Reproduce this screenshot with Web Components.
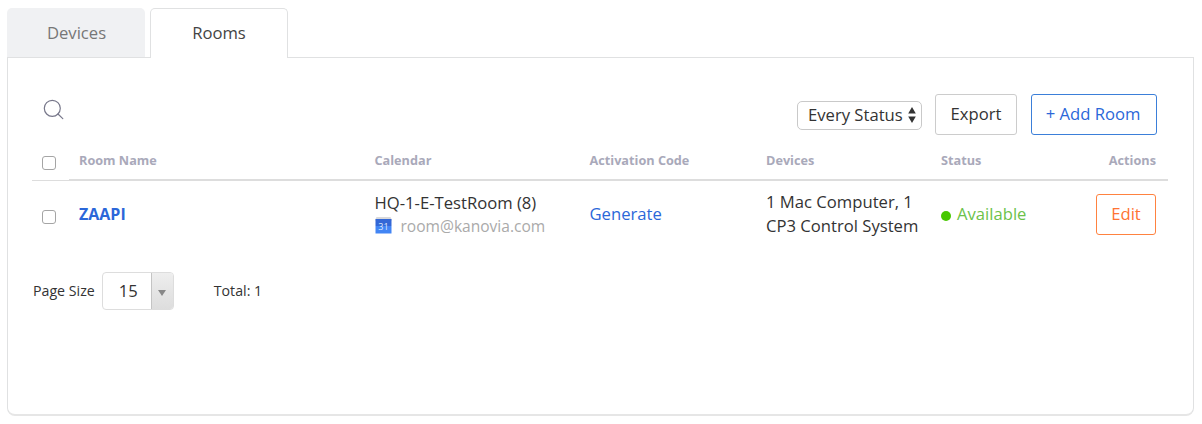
<!DOCTYPE html>
<html lang="en">
<head>
<meta charset="utf-8">
<title>Rooms</title>
<style>
body { margin: 0; background: #fff; font-family: "Open Sans", "Noto Sans", sans-serif; font-size: 16.65px; line-height: 24px; color: #333; }
</style>
</head>
<body>
<rooms-page></rooms-page>
<script>
function define(name, markup) {
  const template = document.createElement('template');
  template.innerHTML = '<style>*{box-sizing:border-box}:host{box-sizing:border-box}</style>' + markup;
  customElements.define(name, class extends HTMLElement {
    constructor() {
      super();
      this.attachShadow({ mode: 'open' }).append(template.content.cloneNode(true));
    }
  });
}

define('tab-item', `
<style>
:host { display: flex; align-items: center; justify-content: center; width: 138px; height: 49px; padding-left: 1px; border-radius: 5px 5px 0 0; background: #f0f1f3; color: #777; }
:host([active]) { height: 50px; padding: 0 0 2px; background: #fff; color: #444; border: 1px solid #e0e1e2; border-bottom: 0; margin-left: 5px; }
</style><slot></slot>`);

define('search-icon', `
<style>:host { display: block; width: 22px; height: 22px; } svg { display: block; }</style>
<svg width="22" height="22" viewBox="0 0 22 22" fill="none" stroke="#77778a" stroke-width="1.2" stroke-linecap="round"><circle cx="9.3" cy="9.3" r="8"/><path d="M15 15L19.8 19.6"/></svg>`);

define('status-select', `
<style>
:host { display: flex; align-items: center; justify-content: space-between; width: 125px; height: 29px; padding: 0 5px 1px 10px; border: 1px solid #c9c9c9; border-radius: 5px; white-space: nowrap; }
svg { display: block; }
</style><span><slot></slot></span>
<svg width="8" height="16" viewBox="0 0 8 16" fill="#333"><path d="M4 0L7.8 6.6H.2zM4 16L.2 9.4H7.8z"/></svg>`);

define('action-button', `
<style>
:host { display: flex; align-items: center; justify-content: center; height: 41px; width: 82px; padding-bottom: 2px; border: 1px solid #ccc; border-radius: 3px; background: #fff; white-space: nowrap; }
:host([kind=primary]) { width: 126px; padding-right: 2px; border-color: #3b7fd9; color: #2b67d9; }
:host([kind=edit]) { width: 60px; border-color: #ff8240; color: #ff7433; }
</style><slot></slot>`);

define('check-box', `
<style>:host { display: block; width: 14px; height: 14px; border: 1px solid #a5a5a5; border-radius: 3px; background: #fff; }</style>`);

define('calendar-icon', `
<style>:host { display: block; width: 17px; height: 17px; } svg { display: block; } text { font: 9px "Open Sans", sans-serif; }</style>
<svg width="17" height="17" viewBox="0 0 17 17"><path fill="#d9d9db" d="M1.5 0H15.5L16.5 2V4H.5V2z"/><path fill="#3367d6" d="M.5 2H16.5V9H.5z"/><path fill="#4285f4" d="M.5 9H16.5V16.5H.5z"/><text x="8.5" y="12.6" text-anchor="middle" fill="#dce7fb">31</text></svg>`);

define('status-label', `
<style>:host { display: flex; align-items: center; height: 24px; gap: 6px; color: #6cc24a; } i { width: 10px; height: 10px; border-radius: 50%; background: #47c800; margin-top: 3px; }</style>
<i></i><slot></slot>`);

define('page-size', `
<style>
:host { display: flex; width: 72px; height: 38px; border: 1px solid #ddd; border-radius: 4px; overflow: hidden; }
span { flex: 1; display: flex; align-items: center; justify-content: center; padding-left: 3px; font-size: 16.6px; }
b { width: 22px; display: flex; align-items: center; justify-content: center; padding-top: 3px; border-left: 1px solid #c4c4c4; background: linear-gradient(#eee, #ddd); }
</style><span><slot></slot></span><b><svg width="8" height="6" viewBox="0 0 8 6"><path fill="#888" d="M0 0H8L4 6z"/></svg></b>`);

define('room-table', `
<style>
:host { display: block; width: 1136px; margin-left: 24px; }
.row { display: grid; grid-template-columns: 37px 305.5px 215px 176.5px 175px 1fr; }
.head { height: 47px; color: #a9a9ba; font-size: 12.7px; font-weight: 700; line-height: 18px; }
.head > div { border-bottom: 2px solid #ddd; padding: 17px 0 0 0; }
.head > .check { border-bottom-width: 1px; padding: 22px 0 0 10px; }
.head .name, .body .name { padding-left: 10px; }
.actions { display: flex; justify-content: space-between; }
.head .actions { padding-right: 12px; }
.body { height: 67px; align-items: start; }
.body > div { padding-top: 21px; }
.body .check { padding: 29px 0 0 10px; }
.body .name { color: #2b67d9; font-weight: 700; font-size: 16px; }
.body .cal { padding-top: 10px; }
.body .devices { padding-top: 9px; }
.email { display: flex; align-items: center; gap: 9px; color: #aaa; height: 22px; font-size: 15.55px; }
.email calendar-icon { margin-top: -1px; }
.body .actions { padding: 13px 12px 0 0; }
status-label { margin-top: 8px; }
.link { color: #2b67d9; }
</style>
<div class="row head"><div class="check"><check-box></check-box></div><div class="name">Room Name</div><div>Calendar</div><div>Activation Code</div><div>Devices</div><div class="actions"><span>Status</span><span>Actions</span></div></div>
<div class="row body"><div class="check"><check-box></check-box></div><div class="name">ZAAPI</div><div class="cal">HQ-1-E-TestRoom (8)<div class="email"><calendar-icon></calendar-icon><span>room@kanovia.com</span></div></div><div class="link">Generate</div><div class="devices">1 Mac Computer, 1<br>CP3 Control System</div><div class="actions"><status-label>Available</status-label><action-button kind="edit">Edit</action-button></div></div>`);

define('rooms-page', `
<style>
:host { display: block; height: 424px; padding: 8px 0 0 7px; }
nav { display: flex; align-items: flex-start; height: 49px; position: relative; z-index: 1; }
main { width: 1187px; height: 359px; border: 1px solid #e0e1e2; border-bottom: 2px solid #e6e6e6; border-radius: 0 0 8px 8px; }
.tools { display: flex; height: 76px; padding: 36px 36px 0 35px; }
.tools search-icon { margin-top: 5px; }
.tools status-select { margin: 7px 13px 0 auto; }
.tools action-button + action-button { margin-left: 14px; }
.pager { display: flex; align-items: center; margin: 24px 0 0 25px; font-size: 14.2px; }
page-size { margin: 0 40px 0 7px; }
</style>
<nav><tab-item>Devices</tab-item><tab-item active>Rooms</tab-item></nav>
<main>
<div class="tools"><search-icon></search-icon><status-select>Every Status</status-select><action-button>Export</action-button><action-button kind="primary">+ Add Room</action-button></div>
<room-table></room-table>
<div class="pager"><span>Page Size</span><page-size>15</page-size><span>Total: 1</span></div>
</main>`);
</script>
</body>
</html>
